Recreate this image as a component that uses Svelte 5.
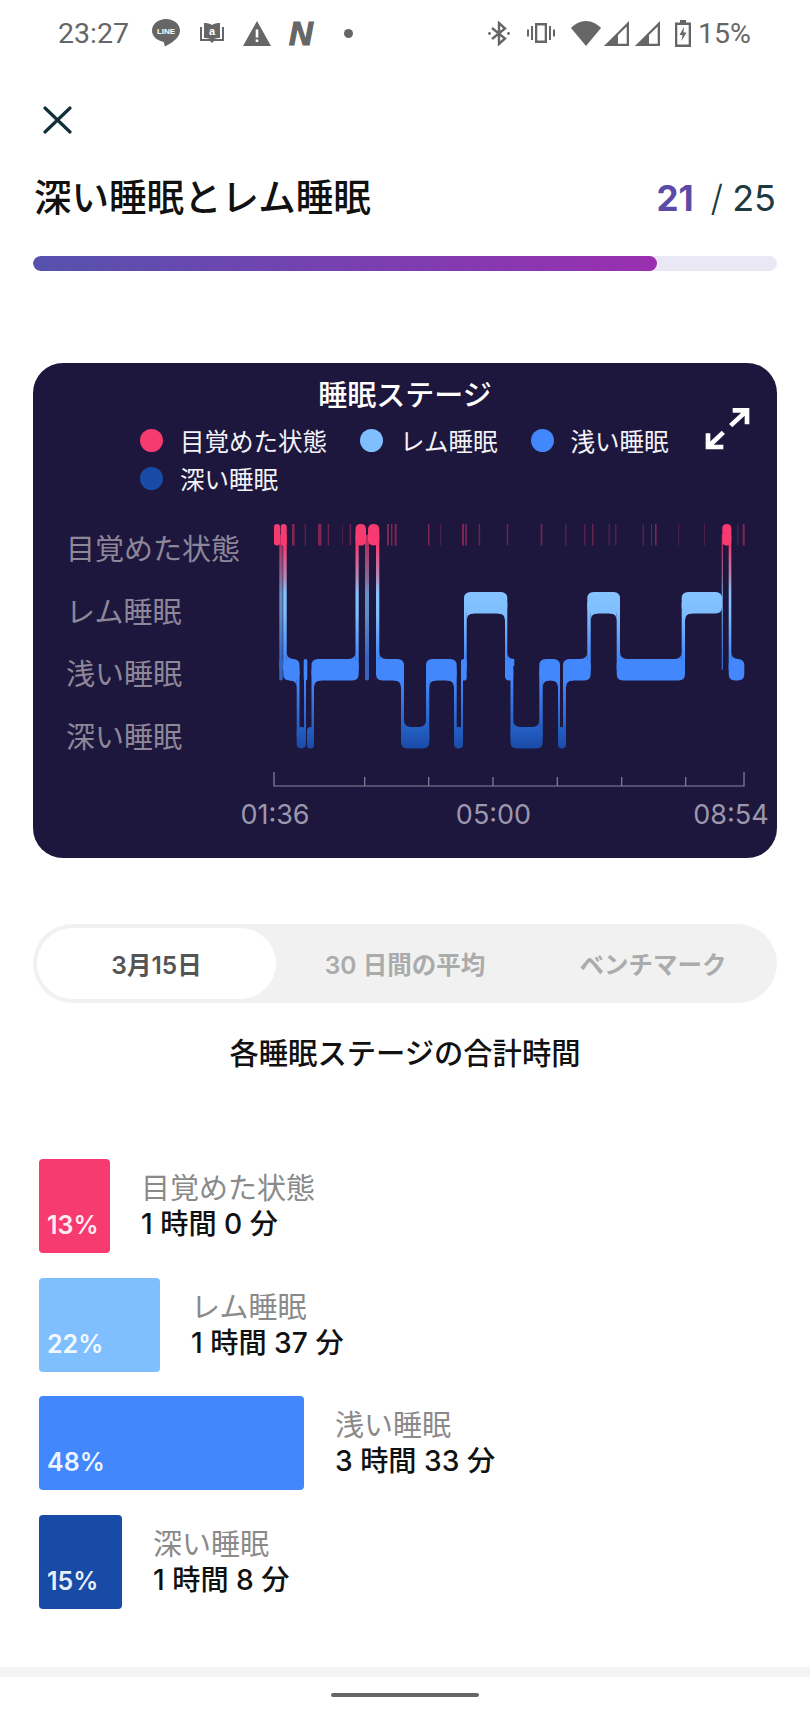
<script>
  const rowY = [524, 592, 659, 727];
  const bandH = 21.5;

  // stage bands, x in page pixels
  const bands = [
    [0, 274, 280], [0, 280.7, 286.7], [0, 355.5, 366], [0, 368, 379.3], [0, 722.3, 731.3],
    [1, 464, 507.3], [1, 587.3, 620], [1, 681.7, 722],
    [2, 283.2, 299.5], [2, 303.7, 307.3], [2, 311.5, 358.7], [2, 376, 404], [2, 426, 456.7],
    [2, 461, 466.7], [2, 505, 513.3], [2, 539.3, 560], [2, 563, 590.7], [2, 616.7, 685], [2, 728.7, 744.3],
    [3, 296.7, 306], [3, 307, 314], [3, 401, 429.3], [3, 454, 463], [3, 510.5, 542.7], [3, 558, 566]
  ];

  // x0, x1, upper row, lower row, side of upper band, side of lower band
  const links = [
    [283.2, 286.7, 0, 2, 0, 1], [296.7, 299.5, 2, 3, -1, 0], [304, 306, 2, 3, 0, 0],
    [311.5, 314, 2, 3, 1, 0], [355.5, 358.7, 0, 2, 0, -1], [376, 379.3, 0, 2, 0, 1],
    [401, 404, 2, 3, -1, 1], [426, 429.3, 2, 3, 1, -1], [454, 456.7, 2, 3, -1, 0],
    [461, 463, 2, 3, 0, 0], [464, 466.7, 1, 2, 1, 0], [505, 507.3, 1, 2, -1, 1],
    [510.5, 513.3, 2, 3, 0, 1], [539.3, 542.7, 2, 3, 1, -1], [558, 560, 2, 3, -1, 0],
    [563, 566, 2, 3, 1, 0], [587.3, 590.7, 1, 2, 1, -1], [616.7, 620, 1, 2, -1, 1],
    [681.7, 685, 1, 2, 1, -1], [728.7, 731.3, 0, 2, 0, 1]
  ];

  // the paler transitions that end in a short stub
  const faintBands = [[2, 279.3, 282.7], [2, 365, 369]];
  const faintLinks = [[279.3, 282.7, 0, 2, 0, 0], [365, 369, 0, 2, 0, 0], [721.7, 723, 0, 2, 0, 0]];

  const awakeTicks = [
    [292, 2.6, 0.6], [304.7, 1, 0.5], [318, 3.4, 0.6], [327.7, 1.4, 0.5], [342.3, 0.8, 0.35], [349.7, 1.4, 0.5],
    [387, 2, 0.6], [391, 1.4, 0.6], [394.7, 2, 0.6], [428, 1.4, 0.6], [440.3, 1, 0.4], [462, 2, 0.6],
    [465.3, 1.6, 0.6], [478.7, 1.4, 0.5], [506.7, 1, 0.4], [507.3, 1, 0.4], [540.7, 1.6, 0.55], [565.3, 1, 0.5],
    [584.3, 1, 0.5], [592, 1.4, 0.5], [608.7, 1, 0.5], [615.3, 1, 0.5], [642.7, 1, 0.5], [651, 1, 0.5],
    [655, 1.6, 0.6], [678.3, 0.8, 0.4], [704, 0.8, 0.35], [737.3, 1, 0.4], [742.7, 2, 0.6]
  ];

  const axisTicks = [364.7, 428.7, 493, 557.3, 621.7, 685.7];
  const times = [[275, '01:36'], [493.5, '05:00'], [731, '08:54']];

  function band([row, x0, x1]) {
    const y0 = rowY[row];
    const y1 = y0 + bandH;
    const r = Math.min(6.5, (x1 - x0) / 2);
    return `M${x0 + r} ${y0}H${x1 - r}Q${x1} ${y0} ${x1} ${y0 + r}V${y1 - r}Q${x1} ${y1} ${x1 - r} ${y1}H${x0 + r}Q${x0} ${y1} ${x0} ${y1 - r}V${y0 + r}Q${x0} ${y0} ${x0 + r} ${y0}Z`;
  }

  // concave corner between a link and its band, with a patch into the band
  function fillet(x, y, dir, vert) {
    const r = 7;
    return `M${x} ${y - vert * r}H${x + dir * r}V${y}Q${x} ${y} ${x} ${y + vert * r}Z`;
  }

  // one path per shape, so overlaps with opposite winding leave no holes
  function link([x0, x1, a, b, up, low]) {
    const top = rowY[a] + bandH / 2;
    const bottom = rowY[b] + bandH / 2;
    const parts = [`M${x0} ${top}H${x1}V${bottom}H${x0}Z`];
    if (up) parts.push(fillet(up < 0 ? x0 : x1, rowY[a] + bandH, up, 1));
    if (low) parts.push(fillet(low < 0 ? x0 : x1, rowY[b], low, -1));
    return parts;
  }

  const solidShapes = [...bands.map(band), ...links.flatMap(link)];
  const faintShapes = [...faintBands.map(band), ...faintLinks.flatMap(link)];

  const legend = [
    { name: '目覚めた状態', color: '#f73a6f' },
    { name: 'レム睡眠', color: '#7fbfff' },
    { name: '浅い睡眠', color: '#4287fb' },
    { name: '深い睡眠', color: '#174ba6' }
  ];

  const totals = [
    { name: '目覚めた状態', pct: '13%', n: '1', m: '0', width: 71, color: '#f73a6f' },
    { name: 'レム睡眠', pct: '22%', n: '1', m: '37', width: 121, color: '#7fbfff' },
    { name: '浅い睡眠', pct: '48%', n: '3', m: '33', width: 265, color: '#4287fb' },
    { name: '深い睡眠', pct: '15%', n: '1', m: '8', width: 83, color: '#174ba6' }
  ];
</script>

<div class="page">
  <div class="status">
    <div class="status-group">
      <span class="time">23:27</span>
      <svg class="s-line" width="28" height="28" viewBox="0 0 28 28">
        <path d="M14 0C6.3 0 0 5 0 11.6 0 17.500 5 21.800 11.500 22.800L13 27.500C17 25.500 28 20 28 11.600 28 5 21.700 0 14 0Z" fill="#666" />
        <text x="14" y="15" text-anchor="middle" class="line-text">LINE</text>
      </svg>
      <svg class="s-book" width="26" height="22" viewBox="0 0 26 22">
        <path d="M1 5V19H11L13 21 15 19H25V5H23V17H3V5Z" fill="#666" />
        <path d="M5 1C8 1 11 1.500 13 3 15 1.500 18 1 21 1V16C18 16 15 16.500 13 18 11 16.500 8 16 5 16Z" fill="#666" />
        <text x="13" y="13" text-anchor="middle" class="book-text">a</text>
      </svg>
      <svg class="s-warn" width="28" height="25" viewBox="0 0 28 25">
        <path d="M14 0L28 25H0Z" fill="#666" />
        <path d="M12.700 8.500H15.300V16.500H12.700ZM12.700 18.500H15.300V21H12.700Z" fill="#fff" />
      </svg>
      <span class="s-n">N</span>
      <span class="s-dot"></span>
    </div>
    <div class="status-group">
      <svg class="s-bt" width="22" height="25" viewBox="0 0 22 25" fill="none" stroke="#666" stroke-width="2.400">
        <path d="M4 7L17 17.500 11 23V2L17 7.500 4 18" />
        <circle cx="1.500" cy="12.500" r="1.400" fill="#666" stroke="none" />
        <circle cx="20.500" cy="12.500" r="1.400" fill="#666" stroke="none" />
      </svg>
      <svg class="s-vib" width="28" height="20" viewBox="0 0 28 20" fill="#666">
        <path d="M8 0H20V20H8ZM10.300 2.500V17.500H17.700V2.500Z" fill-rule="evenodd" />
        <rect x="4" y="3" width="2" height="14" />
        <rect x="22" y="3" width="2" height="14" />
        <rect x="0" y="6.500" width="2" height="7" />
        <rect x="26" y="6.500" width="2" height="7" />
      </svg>
      <svg class="s-wifi" width="30" height="25" viewBox="0 0 30 25">
        <path d="M15 25L0 7C4 3 9 0 15 0S26 3 30 7Z" fill="#666" />
      </svg>
      <svg class="s-sig" width="25" height="25" viewBox="0 0 25 25">
        <path d="M25 0V25H0ZM22.700 5.500L14 14V22.700H22.700Z" fill="#666" fill-rule="evenodd" />
        <path d="M14 14V25H0Z" fill="#666" />
      </svg>
      <svg class="s-sig s-sig2" width="25" height="25" viewBox="0 0 25 25">
        <path d="M25 0V25H0ZM22.700 5.500L14 14V22.700H22.700Z" fill="#666" fill-rule="evenodd" />
        <path d="M14 14V25H0Z" fill="#666" />
      </svg>
      <svg class="s-bat" width="16" height="27" viewBox="0 0 16 27">
        <path d="M5 0H11V2.500H16V27H0V2.500H5ZM2.300 5V24.600H13.700V5Z" fill="#666" fill-rule="evenodd" />
        <path d="M9 7L4.500 15H7.500L6.500 21 11.500 12.500H8.500Z" fill="#666" />
      </svg>
      <span class="pct">15%</span>
    </div>
  </div>

  <svg class="close" width="29" height="28" viewBox="0 0 29 28" fill="none" stroke="#12303a" stroke-width="3.200" stroke-linecap="round">
    <path d="M2 2L27 26M27 2L2 26" />
  </svg>

  <div class="title-row">
    <h1 class="title">深い睡眠とレム睡眠</h1>
    <div class="count"><b>21</b><span class="slash">/</span>25</div>
  </div>

  <div class="progress"><div class="progress-fill"></div></div>

  <section class="card">
    <h2 class="card-title">睡眠ステージ</h2>
    <svg class="expand" width="80" height="70" viewBox="0 0 240 210" fill="none" stroke="#fff" stroke-width="14">
      <path d="M128 46H171V88M168 49L122 92" />
      <path d="M54 115V156H100M57 153L100 112" />
    </svg>
    <div class="legend">
      {#each legend as item}
        <div class="legend-item">
          <span class="legend-dot" style="background: {item.color}"></span>
          <span>{item.name}</span>
        </div>
      {/each}
    </div>
    <div class="chart-row">
      <div class="stage-labels">
        {#each legend as item}
          <div class="stage-label">{item.name}</div>
        {/each}
      </div>
      <svg class="chart" width="537" height="348" viewBox="240 510 537 348">
        <defs>
          <linearGradient id="stage" gradientUnits="userSpaceOnUse" x1="0" y1="524" x2="0" y2="748">
            <stop offset="0.094" stop-color="#f73a6f" />
            <stop offset="0.237" stop-color="#b58ab8" />
            <stop offset="0.308" stop-color="#86c3ff" />
            <stop offset="0.397" stop-color="#7fbfff" />
            <stop offset="0.603" stop-color="#4287fb" />
            <stop offset="0.701" stop-color="#4287fb" />
            <stop offset="0.906" stop-color="#2560c5" />
            <stop offset="1" stop-color="#1a4ba8" />
          </linearGradient>
        </defs>
        {#each awakeTicks as [x, w, o]}
          <rect {x} y="524" width={w} height="21.5" fill="#f73a6f" opacity={o * 0.75} />
        {/each}
        <g opacity="0.7">
          {#each faintShapes as d}
            <path {d} fill="url(#stage)" />
          {/each}
        </g>
        {#each solidShapes as d}
          <path {d} fill="url(#stage)" />
        {/each}
        <path d="M274 772V786H744V772" fill="none" stroke="#8a84a0" stroke-width="1.200" />
        {#each axisTicks as x}
          <path d="M{x} 777V786" stroke="#8a84a0" stroke-width="1.200" />
        {/each}
        {#each times as [x, label]}
          <text {x} y="824" text-anchor="middle" class="time-label">{label}</text>
        {/each}
      </svg>
    </div>
  </section>

  <div class="tabs">
    <div class="tab active">3月15日</div>
    <div class="tab">30 日間の平均</div>
    <div class="tab">ベンチマーク</div>
  </div>

  <h3 class="heading">各睡眠ステージの合計時間</h3>

  <div class="totals">
    {#each totals as t}
      <div class="total-row">
        <div class="bar" style="width: {t.width}px; background: {t.color}">{t.pct}</div>
        <div class="total-text">
          <div class="total-name">{t.name}</div>
          <div class="total-value">{t.n} 時間 {t.m} 分</div>
        </div>
      </div>
    {/each}
  </div>

  <div class="footer-band"></div>
  <div class="nav-pill"></div>
</div>

<style>
  :global(body) {
    margin: 0;
    background: #fff;
  }

  .page {
    width: 810px;
    height: 1710px;
    overflow: hidden;
    display: flex;
    flex-direction: column;
    font-family: Inter, "Noto Sans CJK JP", sans-serif;
    background: #fff;
  }

  .status {
    height: 66px;
    padding: 0 58px 0 58px;
    display: flex;
    align-items: center;
    justify-content: space-between;
    flex: none;
  }

  .status-group {
    display: flex;
    align-items: center;
  }

  .time,
  .pct {
    font-family: Roboto, sans-serif;
    font-size: 28.500px;
    color: #666;
    white-space: nowrap;
  }

  .time {
    width: 70px;
  }

  .pct {
    width: 54px;
    margin-left: 7px;
  }

  .s-line { margin-left: 24px; }
  .s-book { margin-left: 19px; }
  .s-warn { margin-left: 18px; }
  .s-bt { margin-left: 0; }
  .s-vib { margin-left: 17px; }
  .s-wifi { margin-left: 16px; }
  .s-sig { margin-left: 3px; }
  .s-sig2 { margin-left: 6px; }
  .s-bat { margin-left: 15px; }

  .line-text {
    font-family: "Liberation Sans", sans-serif;
    font-size: 8px;
    font-weight: 700;
    fill: #fff;
  }

  .book-text {
    font-family: "Liberation Sans", sans-serif;
    font-size: 11px;
    font-weight: 700;
    fill: #fff;
  }

  .s-n {
    margin-left: 18px;
    width: 28px;
    font-family: "Liberation Sans", sans-serif;
    font-size: 33px;
    line-height: 33px;
    font-weight: 700;
    font-style: italic;
    color: #666;
    -webkit-text-stroke: 1.2px #666;
  }

  .s-dot {
    width: 9px;
    height: 9px;
    margin-left: 27px;
    border-radius: 50%;
    background: #666;
  }

  .close {
    margin: 40px 0 0 43px;
    flex: none;
  }

  .title-row {
    height: 40px;
    margin-top: 44px;
    padding: 0 34px 0 34px;
    display: flex;
    align-items: center;
    justify-content: space-between;
    flex: none;
  }

  .title {
    margin: 0;
    font-size: 37.500px;
    font-weight: 500;
    color: #111;
    line-height: 40px;
  }

  .count {
    font-size: 36px;
    color: #1c3a40;
    white-space: nowrap;
  }

  .count b {
    font-size: 35px;
    font-weight: 700;
    color: #5b4ba6;
  }

  .slash {
    margin: 0 9px 0 17px;
    font-weight: 300;
  }

  .progress {
    height: 15px;
    margin: 38px 33px 0;
    border-radius: 8px;
    background: #ebe8f5;
    overflow: hidden;
    flex: none;
  }

  .progress-fill {
    width: 624px;
    height: 100%;
    border-radius: 8px;
    background: linear-gradient(90deg, #5652ae, #9a2fb0);
  }

  .card {
    position: relative;
    height: 495px;
    margin: 92px 33px 0;
    padding-top: 19px;
    box-sizing: border-box;
    border-radius: 30px;
    background: #1e173d;
    flex: none;
  }

  .card-title {
    margin: 0;
    font-size: 29px;
    line-height: 28px;
    font-weight: 500;
    color: #fff;
    text-align: center;
  }

  .expand {
    position: absolute;
    left: 657px;
    top: 32px;
  }

  .legend {
    width: 560px;
    margin: 11px 0 0 107px;
    display: flex;
    flex-wrap: wrap;
    column-gap: 33px;
  }

  .legend-item {
    height: 38px;
    display: flex;
    align-items: center;
    gap: 17px;
    font-size: 24.500px;
    color: #f4f3f8;
  }

  .legend-dot {
    width: 23px;
    height: 23px;
    border-radius: 50%;
  }

  .chart-row {
    margin-top: 13px;
    display: flex;
  }

  .stage-labels {
    width: 174px;
    margin-left: 33px;
    padding-top: 9px;
    flex: none;
  }

  .stage-label {
    height: 62.700px;
    line-height: 62.700px;
    font-size: 29px;
    color: #8d8799;
    white-space: nowrap;
  }

  .chart {
    flex: none;
    display: block;
  }

  .time-label {
    font-family: Inter, sans-serif;
    font-size: 27px;
    fill: #9c97ad;
  }

  .tabs {
    height: 79px;
    margin: 66px 33px 0 33px;
    border-radius: 40px;
    background: #f1f1f1;
    display: grid;
    grid-template-columns: repeat(3, 1fr);
    flex: none;
  }

  .tab {
    display: flex;
    align-items: center;
    justify-content: center;
    font-size: 24.500px;
    font-weight: 600;
    color: #ababab;
    white-space: nowrap;
  }

  .tab.active {
    width: 239px;
    height: 71px;
    margin: 4px 0 0 4px;
    border-radius: 36px;
    background: #fff;
    color: #555;
  }

  .heading {
    height: 40px;
    margin: 31px 0 -1px;
    font-size: 29.300px;
    line-height: 40px;
    font-weight: 500;
    color: #111;
    text-align: center;
    flex: none;
  }

  .totals {
    margin: 86px 0 0 39px;
    display: flex;
    flex-direction: column;
    gap: 24.700px;
    flex: none;
  }

  .total-row {
    height: 94px;
    display: flex;
    align-items: center;
    gap: 31px;
  }

  .bar {
    height: 94px;
    box-sizing: border-box;
    padding: 0 0 13px 8px;
    border-radius: 4px;
    display: flex;
    align-items: flex-end;
    font-size: 25px;
    font-weight: 600;
    color: rgba(255, 255, 255, 0.92);
  }

  .total-name {
    position: relative;
    top: 1px;
    font-size: 29px;
    line-height: 37px;
    font-weight: 400;
    color: #8a8a8a;
    white-space: nowrap;
  }

  .total-value {
    font-size: 28.200px;
    line-height: 37px;
    font-weight: 500;
    color: #111;
    white-space: nowrap;
  }

  .footer-band {
    height: 10px;
    margin-top: 58px;
    background: #f4f4f4;
    flex: none;
  }

  .nav-pill {
    width: 148px;
    height: 4px;
    margin: 16px 0 0 331px;
    border-radius: 2px;
    background: #666;
    flex: none;
  }
</style>
